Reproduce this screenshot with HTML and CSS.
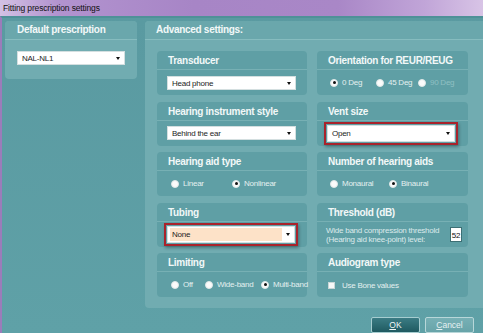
FILE: index.html
```html
<!DOCTYPE html>
<html>
<head>
    <title>Fitting prescription settings</title>
    <link rel="stylesheet" href="styles.css">
</head>
<body>
    <div class="titlebar">Fitting prescription settings</div>

    <div class="content">
        <div class="panels">
            <div class="panel left-panel">
                <div class="panel-header">Default prescription</div>
                <div class="left-body">
                    <div class="select left-select">NAL-NL1<span class="arrow"></span></div>
                </div>
            </div>

            <div class="panel advanced">
                <div class="panel-header">Advanced settings:</div>
                <div class="cards">
                    <div class="card">
                        <div class="card-title">Transducer</div>
                        <div class="card-body">
                            <div class="select">Head phone<span class="arrow"></span></div>
                        </div>
                    </div>
                    <div class="card">
                        <div class="card-title">Orientation for REUR/REUG</div>
                        <div class="card-body radios orientation">
                            <span class="option"><span class="radio checked"></span>0 Deg</span>
                            <span class="option"><span class="radio"></span>45 Deg</span>
                            <span class="option disabled"><span class="radio"></span>90 Deg</span>
                        </div>
                    </div>

                    <div class="card">
                        <div class="card-title">Hearing instrument style</div>
                        <div class="card-body">
                            <div class="select">Behind the ear<span class="arrow"></span></div>
                        </div>
                    </div>
                    <div class="card">
                        <div class="card-title">Vent size</div>
                        <div class="card-body">
                            <div class="marked">
                                <div class="select tall">Open<span class="arrow"></span></div>
                            </div>
                        </div>
                    </div>

                    <div class="card">
                        <div class="card-title">Hearing aid type</div>
                        <div class="card-body radios aid-type">
                            <span class="option"><span class="radio"></span>Linear</span>
                            <span class="option"><span class="radio checked"></span>Nonlinear</span>
                        </div>
                    </div>
                    <div class="card">
                        <div class="card-title">Number of hearing aids</div>
                        <div class="card-body radios aid-count">
                            <span class="option"><span class="radio"></span>Monaural</span>
                            <span class="option"><span class="radio checked"></span>Binaural</span>
                        </div>
                    </div>

                    <div class="card">
                        <div class="card-title">Tubing</div>
                        <div class="card-body">
                            <div class="marked">
                                <div class="select tall"><span class="picked">None</span><span class="arrow"></span></div>
                            </div>
                        </div>
                    </div>
                    <div class="card">
                        <div class="card-title">Threshold (dB)</div>
                        <div class="card-body threshold">
                            <div class="threshold-text">
                                Wide band compression threshold<br>
                                (Hearing aid knee-point) level:
                            </div>
                            <div class="number-box">52</div>
                        </div>
                    </div>

                    <div class="card">
                        <div class="card-title">Limiting</div>
                        <div class="card-body radios limiting">
                            <span class="option"><span class="radio"></span>Off</span>
                            <span class="option"><span class="radio"></span>Wide-band</span>
                            <span class="option"><span class="radio checked"></span>Multi-band</span>
                        </div>
                    </div>
                    <div class="card">
                        <div class="card-title">Audiogram type</div>
                        <div class="card-body check-row">
                            <span class="checkbox"></span>Use Bone values
                        </div>
                    </div>
                </div>
            </div>
        </div>

        <div class="footer">
            <button class="btn btn-ok"><u>O</u>K</button>
            <button class="btn btn-cancel"><u>C</u>ancel</button>
        </div>
    </div>
</body>
</html>
```

FILE: styles.css
```css
body {
    margin: 0;
    width: 483px;
    height: 333px;
    overflow: hidden;
    font-family: "Liberation Sans", Arial, sans-serif;
    background-color: #5b9ca2;
}
.titlebar {
    height: 16px;
    line-height: 16px;
    padding-left: 3px;
    font-size: 8.5px;
    letter-spacing: -0.15px;
    color: #111;
    background: linear-gradient(to right, #d3c1e4 0%, #b293cf 12%, #a785c6 40%, #a987c7 70%, #c1a5d8 88%, #d8c4e6 100%);
}
.content {
    height: 317px;
    box-sizing: border-box;
    border-left: 2px solid #9b7cba;
    border-top: 2px solid #4f9198;
    padding: 3px 0 0 3px;
    overflow: hidden;
    background: linear-gradient(to bottom, #5a9aa1, #5fa1a7);
}
.panels {
    display: flex;
    align-items: flex-start;
    gap: 8px;
}
.panel {
    flex: none;
    background-color: #71acb1;
    border-radius: 4px;
}
.panel-header {
    height: 18px;
    line-height: 18px;
    padding-left: 11px;
    font-size: 10px;
    letter-spacing: -0.3px;
    font-weight: bold;
    color: #f2f8f8;
    border-bottom: 1px solid #86bcbf;
    background-color: #6aa7ac;
    border-radius: 4px 4px 0 0;
}
.left-panel {
    width: 132px;
    height: 58px;
}
.left-panel .panel-header {
    padding-left: 12px;
}
.left-body {
    padding: 11px 12px 0;
}
.advanced {
    width: 345px;
    height: 287px;
}
.cards {
    display: grid;
    grid-template-columns: 150px 151px;
    grid-auto-rows: 44px;
    column-gap: 10px;
    row-gap: 6.5px;
    padding: 11px 0 0 12px;
}
.card {
    background-color: #5f9fa5;
    border-radius: 4px;
}
.card-title {
    height: 18px;
    line-height: 19px;
    padding-left: 11px;
    font-size: 10px;
    letter-spacing: -0.3px;
    font-weight: bold;
    color: #f2f8f8;
    border-bottom: 1px solid #77b0b4;
}
.card-body {
    height: 25px;
    display: flex;
    align-items: center;
    padding-left: 10px;
    font-size: 8px;
    letter-spacing: -0.25px;
    color: #e4f0f0;
}
.select {
    position: relative;
    width: 129px;
    height: 14px;
    line-height: 13px;
    box-sizing: border-box;
    padding-left: 4px;
    font-size: 8px;
    letter-spacing: -0.25px;
    color: #1d1d1d;
    background-color: #fff;
    border: 1px solid #d4dfe0;
}
.select.left-select {
    width: 108px;
}
.select.tall {
    width: 128px;
    height: 17px;
    line-height: 15px;
}
.arrow {
    position: absolute;
    right: 4px;
    top: 50%;
    margin-top: -1px;
    border-left: 2.5px solid transparent;
    border-right: 2.5px solid transparent;
    border-top: 3px solid #111;
}
.marked {
    margin: -3px 0 -3px -3px;
    padding: 1px;
    border: 2px solid #a9232b;
    box-shadow: 1px 2px 3px rgba(0, 0, 0, 0.3);
}
.picked {
    display: block;
    margin: 1px 12px 1px -2px;
    padding-left: 2px;
    height: 13px;
    line-height: 13px;
    background-color: #fde2c8;
}
.radios {
    display: grid;
    padding-left: 13px;
}
.orientation {
    grid-template-columns: 46px 42px auto;
}
.aid-type {
    padding-left: 14px;
    grid-template-columns: 61px auto;
}
.aid-count {
    grid-template-columns: 59px auto;
}
.limiting {
    padding-left: 14px;
    grid-template-columns: 34px 56px auto;
}
.option {
    display: flex;
    align-items: center;
    gap: 4px;
    white-space: nowrap;
}
.option.disabled {
    color: #8fc0c3;
}
.radio {
    width: 8px;
    height: 8px;
    box-sizing: border-box;
    border-radius: 50%;
    background-color: #fbfbfb;
    border: 1px solid #dfe8e8;
    position: relative;
}
.radio.checked::after {
    content: "";
    position: absolute;
    left: 1.5px;
    top: 1.5px;
    width: 3px;
    height: 3px;
    border-radius: 50%;
    background-color: #111;
}
.threshold {
    padding: 0 6px 0 9px;
    justify-content: space-between;
}
.threshold-text {
    line-height: 9.5px;
    color: #dceaeb;
    margin-top: 2px;
}
.number-box {
    width: 12px;
    height: 15px;
    line-height: 15px;
    box-sizing: border-box;
    text-align: center;
    font-size: 8px;
    color: #111;
    background-color: #fff;
    border: 1px solid #3d6f74;
    margin-top: 1px;
}
.check-row {
    padding-left: 11px;
    gap: 7px;
    margin-top: 1px;
}
.checkbox {
    width: 7px;
    height: 7px;
    box-sizing: border-box;
    background-color: #f6f8f8;
    border: 1px solid #c9d6d7;
}
.footer {
    display: flex;
    justify-content: flex-end;
    gap: 5px;
    padding: 9px 9px 0 0;
}
.btn {
    width: 49px;
    height: 16px;
    padding: 0;
    font-family: "Liberation Sans", Arial, sans-serif;
    font-size: 8.5px;
    border-radius: 2px;
    cursor: pointer;
}
.btn-ok {
    color: #eef6f6;
    background: linear-gradient(to bottom, #3b7c84, #1f5a61);
    border: 1px solid #a6cdd0;
}
.btn-cancel {
    color: #e6f1f2;
    background: linear-gradient(to bottom, #77b0b5, #68a4a9);
    border: 1px solid #b8d7d9;
}
```
